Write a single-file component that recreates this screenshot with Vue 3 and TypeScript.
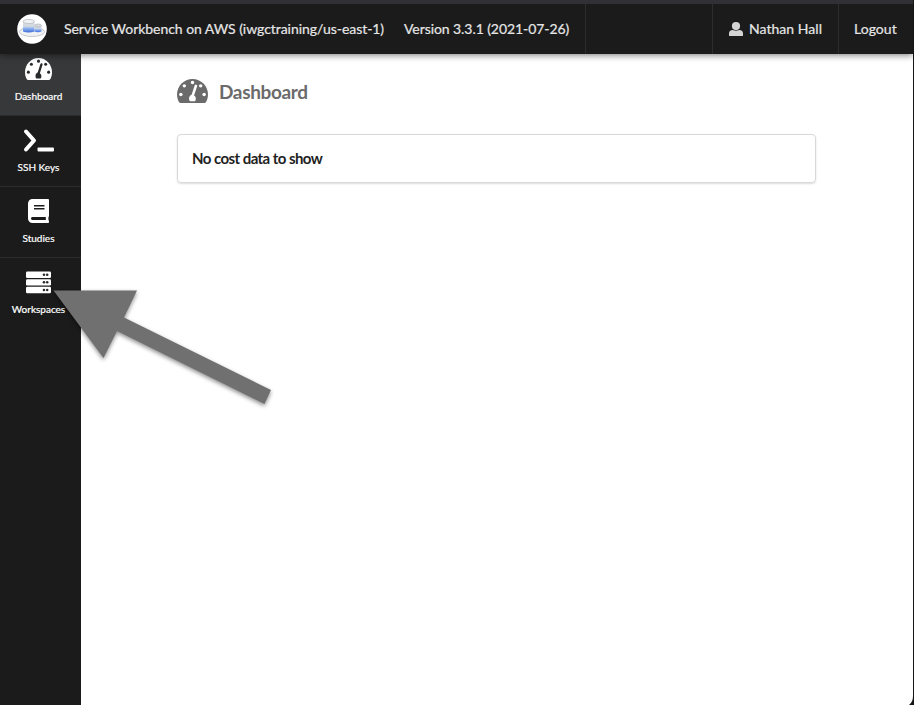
<script setup lang="ts">
interface NavItem {
  label: string
  icon: 'gauge' | 'terminal' | 'book' | 'server'
  active?: boolean
}

const items: NavItem[] = [
  { label: 'Dashboard', icon: 'gauge', active: true },
  { label: 'SSH Keys', icon: 'terminal' },
  { label: 'Studies', icon: 'book' },
  { label: 'Workspaces', icon: 'server' },
]
</script>

<template>
  <div class="app">
    <header class="topbar">
      <svg class="logo" viewBox="0 0 32 32">
        <defs>
          <linearGradient id="drum" x1="0" y1="0" x2="0" y2="1">
            <stop offset="0" stop-color="#dcdfe3" />
            <stop offset=".46" stop-color="#cfd6df" />
            <stop offset=".56" stop-color="#9fc0f1" />
            <stop offset="1" stop-color="#3c6bdc" />
          </linearGradient>
        </defs>
        <circle cx="16" cy="16" r="14.800" fill="#fff" />
        <ellipse cx="16" cy="18.800" rx="12.500" ry="4.700" fill="#f1f2f4" stroke="#c3c7cc" />
        <path d="M7 8.500v10q5.500 2 11.500 0v-10z" fill="url(#drum)" />
        <ellipse cx="12.750" cy="8.500" rx="5.750" ry="2" fill="#f1f2f3" stroke="#aeb3b9" stroke-width=".7" />
        <path d="M18.500 12.500v6q3.500 1.500 7 0v-6z" fill="url(#drum)" />
        <ellipse cx="22" cy="12.500" rx="3.500" ry="1.500" fill="#d9dce0" stroke="#a7adb5" stroke-width=".7" />
      </svg>
      <span class="brand">Service Workbench on AWS (iwgctraining/us-east-1)</span>
      <span class="version">Version 3.3.1 (2021-07-26)</span>
      <span class="spacer"></span>
      <span class="cell user">
        <svg class="user-icon" viewBox="0 0 14 14">
          <circle cx="7" cy="4.100" r="4.100" />
          <path d="M0 13.500v-2q0-3.500 3.800-3.500Q7 9.600 10.200 8 14 8 14 11.500v2q0 .5-.6.500H.6q-.6 0-.6-.5z" />
        </svg>
        <span class="cell-text">Nathan Hall</span>
      </span>
      <span class="cell logout"><span class="cell-text">Logout</span></span>
    </header>

    <div class="body">
      <nav class="sidebar">
        <a v-for="item in items" :key="item.label" class="nav-item" :class="{ active: item.active }">
          <svg v-if="item.icon === 'gauge'" class="nav-icon gauge" viewBox="0 32 576 448" preserveAspectRatio="none">
            <path class="solid" d="M288 32C129 32 0 161 0 320c0 53 14 102 39 145 6 10 16 15 27 15h444c11 0 21-5 27-15 25-43 39-92 39-145C576 161 447 32 288 32z" />
            <g class="cut">
              <circle cx="288" cy="96" r="32" /><circle cx="136" cy="160" r="32" />
              <circle cx="440" cy="160" r="32" /><circle cx="72" cy="320" r="32" /><circle cx="504" cy="320" r="32" />
              <path d="M328 154c4-13 17-20 30-16s20 17 16 30l-57 172c36 18 46 76 17 108H242c-37-48-10-112 29-123z" />
            </g>
          </svg>
          <svg v-else-if="item.icon === 'terminal'" class="nav-icon terminal" viewBox="0 0 31 25">
            <path d="M3 3.500 11 12.500 3 21.500" fill="none" stroke="#fff" stroke-width="4" stroke-linejoin="round" stroke-linecap="round" />
            <rect x="14.500" y="19.500" width="16.500" height="4" rx="1" fill="#fff" />
          </svg>
          <svg v-else-if="item.icon === 'book'" class="nav-icon book" viewBox="0 0 448 512" preserveAspectRatio="none">
            <path fill="#fff" d="M448 360V24c0-13.300-10.700-24-24-24H96C43 0 0 43 0 96v320c0 53 43 96 96 96h328c13.300 0 24-10.700 24-24v-16c0-7.500-3.500-14.300-8.900-18.700-4.200-15.400-4.200-59.300 0-74.700 5.400-4.300 8.900-11.100 8.900-18.600zM128 134c0-3.300 2.700-6 6-6h212c3.300 0 6 2.700 6 6v20c0 3.300-2.700 6-6 6H134c-3.300 0-6-2.700-6-6v-20zm0 64c0-3.300 2.700-6 6-6h212c3.300 0 6 2.700 6 6v20c0 3.300-2.700 6-6 6H134c-3.300 0-6-2.700-6-6v-20zm253.400 250H96c-17.700 0-32-14.300-32-32 0-17.600 14.400-32 32-32h285.400c-1.900 17.100-1.900 46.900 0 64z" />
          </svg>
          <svg v-else class="nav-icon" viewBox="0 0 512 512">
            <g v-for="y in [32, 187, 342]" :key="y">
              <rect x="0" :y="y" width="512" height="132" rx="26" fill="#fff" />
              <circle class="cut" cx="368" :cy="y + 66" r="26" />
              <circle class="cut" cx="434" :cy="y + 66" r="26" />
            </g>
          </svg>
          <span class="nav-label">{{ item.label }}</span>
        </a>
      </nav>

      <main class="content">
        <h1 class="title">
          <svg class="title-icon" viewBox="0 32 576 448" preserveAspectRatio="none">
            <path class="solid" d="M288 32C129 32 0 161 0 320c0 53 14 102 39 145 6 10 16 15 27 15h444c11 0 21-5 27-15 25-43 39-92 39-145C576 161 447 32 288 32z" />
            <g class="cut">
              <circle cx="288" cy="96" r="32" /><circle cx="136" cy="160" r="32" />
              <circle cx="440" cy="160" r="32" /><circle cx="72" cy="320" r="32" /><circle cx="504" cy="320" r="32" />
              <path d="M328 154c4-13 17-20 30-16s20 17 16 30l-57 172c36 18 46 76 17 108H242c-37-48-10-112 29-123z" />
            </g>
          </svg>
          <span class="title-text">Dashboard</span>
        </h1>
        <section class="card"><span class="card-text">No cost data to show</span></section>
      </main>
    </div>

    <svg class="pointer" viewBox="0 0 230 140">
      <path d="M3.500 10.500 87 10.500 74 37.500 221 110 214.500 124 67 51 53.500 78z" />
    </svg>
    <svg class="corner" viewBox="0 0 5 9"><path d="M5 0v9H0Q4 6 4 0z" /></svg>
  </div>
</template>

<style>
body {
  overflow: hidden;
  background: #fff;
}
</style>

<style scoped>
.app {
  position: relative;
  box-sizing: border-box;
  width: 914px;
  height: 705px;
  overflow: hidden;
  display: flex;
  flex-direction: column;
  border-right: 1px solid #151515;
  font-family: Lato, sans-serif;
  font-size: 14px;
}
.topbar {
  position: relative;
  z-index: 2;
  box-sizing: border-box;
  height: 54px;
  flex: none;
  display: flex;
  align-items: center;
  background: #1b1b1b;
  border-top: 4px solid #303036;
  box-shadow: 0 1px 7px rgba(0, 0, 0, 0.55);
  color: #e6e6e6;
  white-space: nowrap;
  -webkit-text-stroke: 0.2px #e6e6e6;
}
.logo {
  width: 32px;
  height: 32px;
  margin: 0 16px;
}
.brand {
  width: 340px;
  padding-bottom: 2px;
  letter-spacing: -0.045px;
}
.version {
  box-sizing: border-box;
  width: 182px;
  height: 50px;
  line-height: 50px;
  border-right: 1px solid #2d2d2e;
  letter-spacing: -0.07px;
}
.spacer {
  flex: 1;
}
.cell {
  box-sizing: border-box;
  height: 50px;
  display: flex;
  align-items: center;
  border-left: 1px solid #2d2d2e;
}
.cell-text {
  padding-bottom: 2px;
  letter-spacing: 0.04px;
}
.user {
  width: 126px;
  padding-left: 16px;
  gap: 6px;
}
.user-icon {
  width: 14px;
  height: 14px;
  fill: #d4d4d4;
}
.logout {
  width: 75px;
  padding-left: 15px;
}
.body {
  flex: 1;
  display: flex;
  min-height: 0;
}
.sidebar {
  width: 81px;
  flex: none;
  margin-top: -9px;
  background: #1b1b1b;
}
.nav-item {
  box-sizing: border-box;
  height: 71px;
  padding: 12px 4px 0 0;
  display: flex;
  flex-direction: column;
  align-items: center;
  color: #fff;
  border-bottom: 1px solid #2d2d2e;
}
.nav-item:last-child {
  border-bottom: 0;
}
.nav-item.active {
  background: #37383a;
}
.nav-icon {
  width: 25px;
  height: 25px;
}
.nav-icon.gauge {
  width: 27px;
  height: 22px;
  margin: 1px 0 2px;
}
.nav-icon.terminal {
  width: 31px;
}
.nav-icon.book {
  width: 21px;
  height: 24px;
  margin-bottom: 1px;
}
.nav-icon .solid {
  fill: #fff;
}
.nav-icon .cut {
  fill: #292a2b;
}
.nav-label {
  margin-top: 7px;
  font-size: 10px;
  line-height: 14px;
  -webkit-text-stroke: 0.2px #fff;
}
.content {
  flex: 1;
  padding: 24px 97px 0 96px;
}
.title {
  margin: 0;
  height: 26px;
  display: flex;
  align-items: center;
  gap: 11px;
  color: #6b6b6b;
  font-size: 18px;
}
.title-icon {
  width: 31px;
  height: 24px;
}
.title-icon .solid {
  fill: #6b6b6b;
}
.title-icon .cut {
  fill: #fff;
}
.title-text {
  font-size: 19px;
  letter-spacing: -0.35px;
}
.card {
  box-sizing: border-box;
  height: 49px;
  margin-top: 30px;
  padding: 0 0 1px 14px;
  display: flex;
  align-items: center;
  border: 1px solid #d7d8d9;
  border-radius: 4px;
  box-shadow: 0 1px 2px rgba(34, 36, 38, 0.15);
  color: #222;
  font-weight: 700;
}
.card-text {
  font-size: 15px;
  letter-spacing: -0.62px;
  word-spacing: 0.3px;
}
.pointer {
  position: absolute;
  z-index: 3;
  left: 50px;
  top: 280px;
  width: 230px;
  height: 140px;
  fill: #707070;
  filter: drop-shadow(0 2px 2px rgba(0, 0, 0, 0.45));
}
.corner {
  position: absolute;
  right: -1px;
  bottom: 0;
  width: 5px;
  height: 9px;
  fill: #151515;
}
</style>
